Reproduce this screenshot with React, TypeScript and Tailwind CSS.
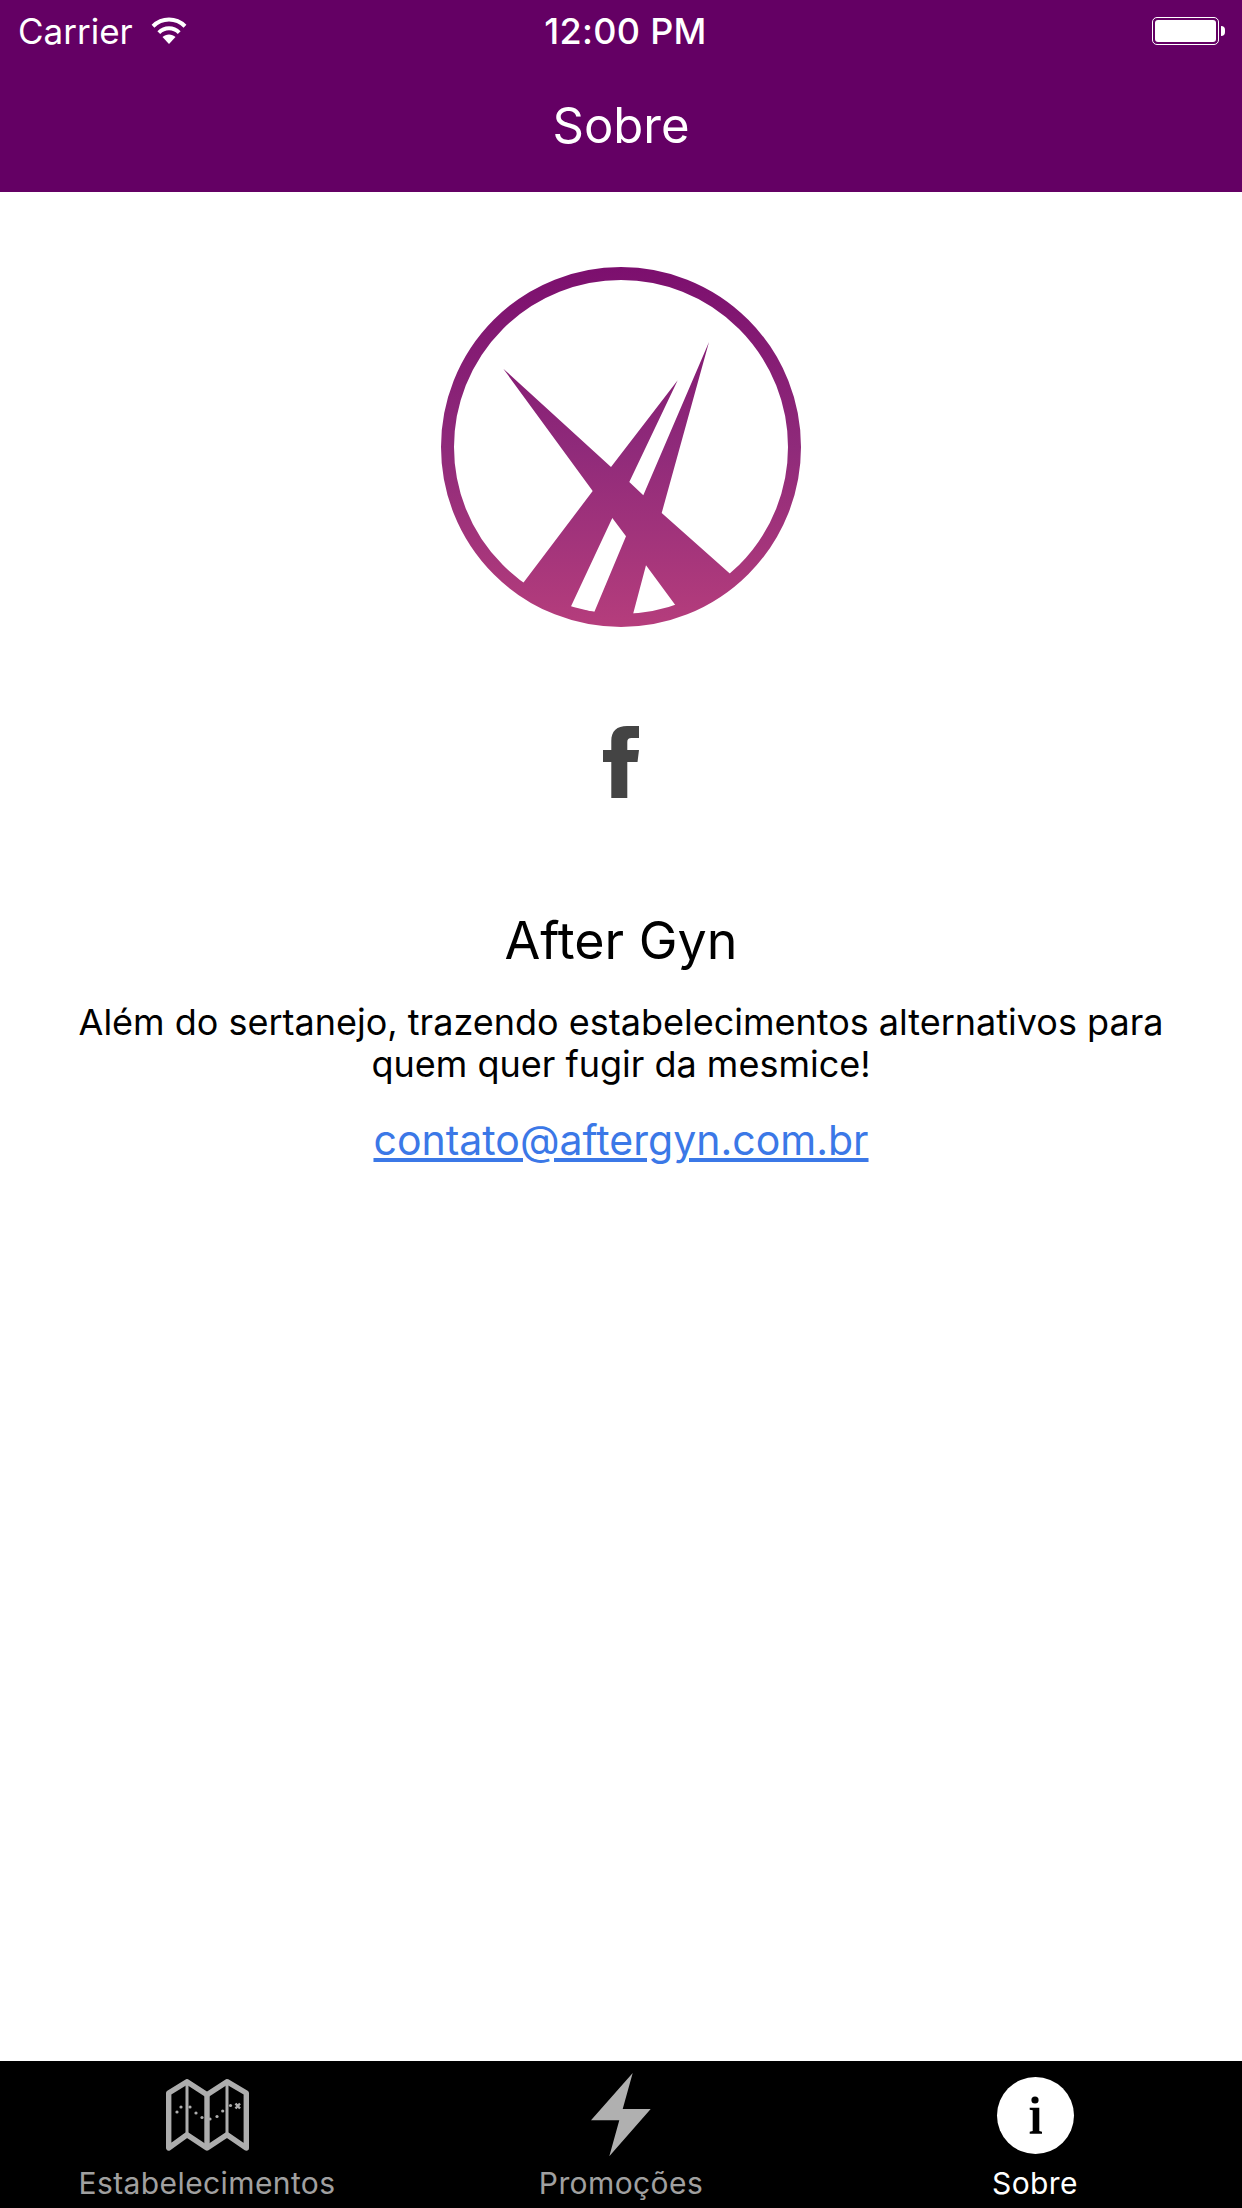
const FONT = "font-['Inter','Noto_Sans',sans-serif]";

function Wifi() {
  return (
    <svg width="38" height="28" viewBox="0 0 38 28" fill="none">
      <path d="M19 27 L12.5 20 C16 16.6 22 16.6 25.5 20 Z" fill="#fff" />
      <path d="M8.8 15.6 C14.6 9.8 23.4 9.8 29.2 15.6" stroke="#fff" strokeWidth="4" />
      <path d="M3 9.2 C12 0.4 26 0.4 35 9.2" stroke="#fff" strokeWidth="4" />
    </svg>
  );
}

function Battery() {
  return (
    <div className="flex items-center">
      <div className="h-[28px] w-[67px] rounded-[5px] border border-white p-[2px]">
        <div className="h-full w-full rounded-[3px] bg-white" />
      </div>
      <div className="ml-[2px] h-[10px] w-[4px] rounded-r-full bg-white" />
    </div>
  );
}

function Logo() {
  return (
    <svg width="360" height="360" viewBox="0 0 360 360">
      <defs>
        <linearGradient id="brand" gradientUnits="userSpaceOnUse" x1="0" y1="0" x2="0" y2="360">
          <stop offset="0" stopColor="#7c0f6e" />
          <stop offset="0.5" stopColor="#8f2a7a" />
          <stop offset="1" stopColor="#b53d7c" />
        </linearGradient>
      </defs>
      <circle cx="180" cy="180" r="173.5" fill="none" stroke="url(#brand)" strokeWidth="13" />
      <path
        fillRule="evenodd"
        fill="url(#brand)"
        d="M62.3 101.7 L170 200 L236.7 113.3 L188.3 215 L202.3 228.3 L268 75 L220.7 246 L293 310.2 A172 172 0 0 1 79.5 319.5 L151.7 224 Z
           M171.3 251 L185 269.3 L153.3 345 A167 167 0 0 1 129.7 340 Z
           M205 298.3 L235 339 A167 167 0 0 1 192 347.3 Z"
      />
    </svg>
  );
}

function FacebookGlyph() {
  return (
    <svg width="36" height="72" viewBox="0 0 36 72">
      <path
        fill="#444444"
        d="M8.3 72 V36 H0 V24 H8.3 V15 C8.3 5 14 0 24 0 H36 V12 H28.5 C25.5 12 24.3 13.5 24.3 16 V24 H36 L34.5 36 H24.3 V72 Z"
      />
    </svg>
  );
}

function MapIcon() {
  const trail = [
    [11, 33], [15, 28], [24, 28], [30, 34], [36, 38.5], [44, 40], [51, 37.5], [56.7, 32], [64.5, 26.5],
  ];
  return (
    <svg width="83" height="72" viewBox="0 0 83 72" fill="none">
      <path
        d="M2.7 14 L21 2.7 L41 15.7 L61 2.7 L80.3 14 V69 L61 55.7 L41 69 L21 55.7 L2.7 69 Z"
        stroke="#adadad"
        strokeWidth="5.4"
        strokeLinejoin="round"
      />
      <path d="M21 3 V56 M61 3 V56" stroke="#adadad" strokeWidth="3" />
      <path d="M41 16 V69" stroke="#adadad" strokeWidth="5.4" />
      {trail.map(([cx, cy]) => (
        <circle key={cx} cx={cx} cy={cy} r="1.6" fill="#adadad" />
      ))}
      <path d="M69.5 24.5 L74 29.5 M74 24.5 L69.5 29.5" stroke="#adadad" strokeWidth="2.4" />
    </svg>
  );
}

function BoltIcon() {
  return (
    <svg width="60" height="84" viewBox="0 0 60 84">
      <path fill="#b0b0b0" d="M41.7 0 L31.7 36 H59.7 L18.3 83.3 L28.3 47.3 H0 Z" />
    </svg>
  );
}

function InfoIcon() {
  return (
    <div className="flex h-[77px] w-[77px] items-center justify-center rounded-full bg-white">
      <svg width="77" height="77" viewBox="0 0 77 77">
        <circle cx="38" cy="23" r="3.6" fill="#000" />
        <path
          fill="#000"
          d="M32.7 30.7 H42.3 V54 L45 54.7 V56.7 H32.7 V54.7 L35.7 54 V33.3 L32.7 32.7 Z"
        />
      </svg>
    </div>
  );
}

function Tab({ icon, label, active }: { icon: React.ReactNode; label: string; active?: boolean }) {
  return (
    <div className="flex flex-col items-center pt-[4px]">
      <div className="flex h-[100px] items-center justify-center">{icon}</div>
      <span
        className={`text-[30px] leading-[36px] tracking-[0.4px] ${active ? "text-white" : "text-[#a0a0a0]"}`}
      >
        {label}
      </span>
    </div>
  );
}

export default function App() {
  return (
    <div className={`flex h-[2208px] w-[1242px] flex-col overflow-hidden bg-white ${FONT}`}>
      <header className="h-[192px] bg-[#640064] text-white">
        <div className="grid h-[62px] grid-cols-3 items-center pl-[18px] pr-[17px]">
          <div className="flex items-center gap-[17px]">
            <span className="text-[35px] leading-[40px]">Carrier</span>
            <Wifi />
          </div>
          <div className="pl-[8px] text-center text-[36px] font-medium leading-[40px] tracking-[0.3px]">12:00 PM</div>
          <div className="flex justify-end">
            <Battery />
          </div>
        </div>
        <h1 className="pt-[29px] text-center text-[49px] font-normal leading-[70px]">Sobre</h1>
      </header>

      <main className="flex flex-1 flex-col items-center pt-[75px] text-black">
        <Logo />
        <div className="mt-[99px]">
          <FacebookGlyph />
        </div>
        <h2 className="mt-[112px] text-[52px] font-normal leading-[62px]">After Gyn</h2>
        <p className="mt-[29px] w-[1110px] text-center text-[36px] leading-[42px]">
          Além do sertanejo, trazendo estabelecimentos alternativos para quem quer fugir da mesmice!
        </p>
        <a className="mt-[30px] text-[41px] leading-[50px] text-[#3b78e7] underline">contato@aftergyn.com.br</a>
      </main>

      <nav className="grid h-[147px] grid-cols-3 bg-black">
        <Tab icon={<MapIcon />} label="Estabelecimentos" />
        <Tab icon={<BoltIcon />} label="Promoções" />
        <Tab icon={<InfoIcon />} label="Sobre" active />
      </nav>
    </div>
  );
}
